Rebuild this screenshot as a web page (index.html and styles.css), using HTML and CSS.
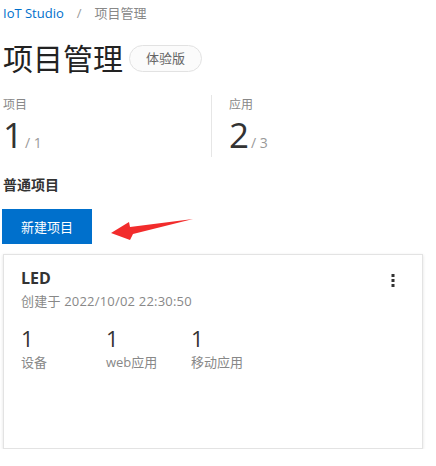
FILE: index.html
```html
<!DOCTYPE html>
<html lang="zh-CN">
<head>
<meta charset="utf-8">
<title>项目管理</title>
<link rel="stylesheet" href="styles.css">
</head>
<body>
<div class="page">
  <nav class="breadcrumb">
    <a class="crumb-link" href="#">IoT Studio</a>
    <span class="crumb-sep">/</span>
    <span class="crumb-current">项目管理</span>
  </nav>

  <div class="title-row">
    <h1 class="title">项目管理</h1>
    <span class="badge">体验版</span>
  </div>

  <div class="stats">
    <div class="stat">
      <div class="stat-label">项目</div>
      <div class="stat-value"><span class="stat-num">1</span><span class="stat-total">/ 1</span></div>
    </div>
    <div class="stat stat-divided">
      <div class="stat-label">应用</div>
      <div class="stat-value"><span class="stat-num">2</span><span class="stat-total">/ 3</span></div>
    </div>
  </div>

  <h2 class="section-title">普通项目</h2>

  <button class="btn-primary">新建项目</button>

  <div class="card">
    <div class="card-head">
      <div>
        <div class="card-name">LED</div>
        <div class="card-date">创建于 2022/10/02 22:30:50</div>
      </div>
      <svg class="kebab" width="4" height="14" viewBox="0 0 4 14">
        <rect x="0.5" y="0" width="3" height="3" fill="#333"/>
        <rect x="0.5" y="5" width="3" height="3" fill="#333"/>
        <rect x="0.5" y="10" width="3" height="3" fill="#333"/>
      </svg>
    </div>
    <div class="card-stats">
      <div class="card-stat"><div class="card-num">1</div><div class="card-label">设备</div></div>
      <div class="card-stat"><div class="card-num">1</div><div class="card-label">web应用</div></div>
      <div class="card-stat"><div class="card-num">1</div><div class="card-label">移动应用</div></div>
    </div>
  </div>

  <svg class="annotation-arrow" width="90" height="26" viewBox="0 0 90 26">
    <polygon points="1,14 19,3 20,8 83,0 23,15 20,21" fill="#f22c2c"/>
  </svg>
</div>
</body>
</html>
```

FILE: styles.css
```css
* { box-sizing: border-box; }

html, body {
  margin: 0;
  padding: 0;
  background: #fff;
}

body {
  font-family: "Open Sans", "Noto Sans CJK SC", sans-serif;
  color: #333;
}

.page {
  position: relative;
  padding: 3px 0 0 3px;
  width: 436px;
}

.breadcrumb {
  display: flex;
  height: 20px;
  line-height: 20px;
  font-size: 13px;
}

.crumb-link {
  color: #0070cc;
  text-decoration: none;
}

.crumb-sep {
  color: #999;
  margin: 0 13px;
}

.crumb-current {
  color: #888;
}

.title-row {
  display: flex;
  align-items: flex-start;
  margin-top: 16px;
  height: 40px;
}

.title {
  margin: 0;
  font-size: 30px;
  font-weight: 400;
  line-height: 40px;
  color: #222;
}

.badge {
  margin: 6px 0 0 6px;
  height: 27px;
  line-height: 25px;
  padding: 0 16px;
  border: 1px solid #e2e2e2;
  border-radius: 14px;
  background: #fbfbfb;
  font-size: 13px;
  color: #666;
}

.stats {
  display: flex;
  margin-top: 16px;
}

.stat {
  width: 208px;
  padding-bottom: 2px;
}

.stat-divided {
  border-left: 1px solid #e6e6e6;
  padding-left: 17px;
}

.stat-label {
  font-size: 12px;
  line-height: 20px;
  color: #888;
}

.stat-value {
  line-height: 40px;
  height: 40px;
}

.stat-num {
  font-size: 35px;
  color: #333;
}

.stat-total {
  font-size: 14px;
  color: #999;
  margin-left: 2px;
}

.section-title {
  margin: 18px 0 0 0;
  font-size: 14px;
  font-weight: 700;
  line-height: 20px;
  color: #333;
}

.btn-primary {
  display: block;
  margin: 14px 0 0 -1px;
  width: 90px;
  height: 35px;
  border: 0;
  border-radius: 0;
  background: #0070cc;
  color: #fff;
  font-family: "Open Sans", "Noto Sans CJK SC", sans-serif;
  font-size: 13px;
  padding: 0;
}

.card {
  margin-top: 10px;
  width: 420px;
  height: 195px;
  border: 1px solid #e3e3e3;
  box-shadow: 0 1px 3px rgba(0, 0, 0, 0.12);
  padding: 13px 27px 0 17px;
  background: #fff;
}

.card-head {
  display: flex;
  justify-content: space-between;
  align-items: flex-start;
}

.card-name {
  font-size: 16px;
  font-weight: 700;
  line-height: 20px;
  color: #333;
}

.card-date {
  margin-top: 3px;
  font-size: 13px;
  line-height: 20px;
  color: #888;
  letter-spacing: 0.2px;
}

.kebab {
  margin-top: 6px;
}

.card-stats {
  display: flex;
  margin-top: 13px;
}

.card-stat {
  width: 85px;
}

.card-num {
  font-size: 22px;
  line-height: 28px;
  color: #333;
}

.card-label {
  font-size: 13px;
  line-height: 20px;
  color: #888;
}

.annotation-arrow {
  position: absolute;
  left: 110px;
  top: 219px;
}
```
